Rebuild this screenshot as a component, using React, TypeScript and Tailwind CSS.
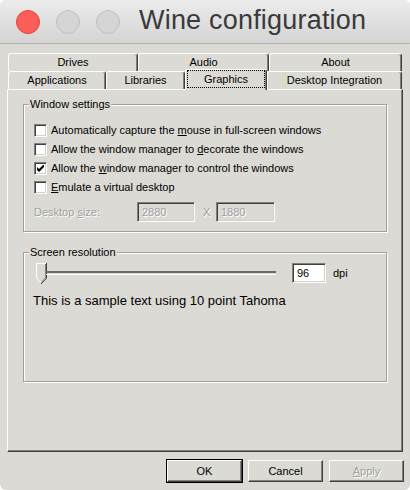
import React, { type FC, type ReactNode } from "react";

const raised =
  "border-t border-l border-white border-r border-b border-r-[#404040] border-b-[#404040] shadow-[inset_-1px_-1px_0_#808080]";
const sunken =
  "border border-t-[#808080] border-l-[#808080] border-r-white border-b-white shadow-[inset_1px_1px_0_#404040,inset_-1px_-1px_0_#d4d0c8]";

const Tab: FC<{ label: string; w: string }> = ({ label, w }) => (
  <div
    className={`${w} h-[18px] flex items-center justify-center rounded-t-[3px] border-t border-l border-white border-r border-r-[#404040] shadow-[inset_-1px_0_0_#808080] text-black`}
  >
    {label}
  </div>
);

const Checkbox: FC<{ checked?: boolean }> = ({ checked }) => (
  <div className={`w-[13px] h-[13px] bg-white ${sunken} flex items-center justify-center shrink-0`}>
    {checked && (
      <svg width="7" height="7" viewBox="0 0 7 7">
        <path d="M0 2v3l2 2 5-5V-1L2 4z" fill="#000" />
      </svg>
    )}
  </div>
);

const CheckRow: FC<{ checked?: boolean; children: ReactNode }> = ({ checked, children }) => (
  <div className="h-[19px] flex items-center gap-[4px]">
    <Checkbox checked={checked} />
    <span>{children}</span>
  </div>
);

const Group: FC<{ title: string; className: string; children: ReactNode }> = ({
  title,
  className,
  children,
}) => (
  <div
    className={`relative border border-[#a0a0a0] shadow-[1px_1px_0_#fff,inset_1px_1px_0_#fff] ${className}`}
  >
    <span className="absolute left-[5px] -top-[8px] bg-[#dcdad5] pl-[1px] pr-[1px] leading-[14px]">
      {title}
    </span>
    {children}
  </div>
);

const Button: FC<{ children: ReactNode; def?: boolean; disabled?: boolean }> = ({
  children,
  def,
  disabled,
}) => (
  <div
    className={`w-[75px] h-[22px] flex items-center justify-center ${
      def ? "outline outline-1 outline-black" : ""
    } ${raised} ${disabled ? "text-[#a0a0a0] [text-shadow:1px_1px_0_#fff]" : "text-black"}`}
  >
    {children}
  </div>
);

const TrafficLight: FC<{ color: string; ring: string }> = ({ color, ring }) => (
  <div className={`w-[24px] h-[24px] rounded-full ${color} border ${ring}`} />
);

export default function App() {
  return (
    <div className="w-[410px] h-[490px] bg-white">
      <div
        className="w-full h-full rounded-[6px] overflow-hidden flex flex-col bg-[#dcdad5] text-[11px] text-black"
        style={{ fontFamily: '"Liberation Sans", Arial, sans-serif' }}
      >
        {/* title bar */}
        <div className="h-[44px] shrink-0 flex items-center bg-gradient-to-b from-[#ececec] to-[#d4d4d4] border-b border-[#b3b3b3] pl-[16px]">
          <div className="flex gap-[16px]">
            <TrafficLight color="bg-[#fc5f57]" ring="border-[#e0443e]" />
            <TrafficLight color="bg-[#d5d5d5]" ring="border-[#c0c0c0]" />
            <TrafficLight color="bg-[#d5d5d5]" ring="border-[#c0c0c0]" />
          </div>
          <div className="ml-[19px] text-[27px] text-[#3a3a3a] leading-none pb-[2px] tracking-[0.2px]">
            Wine configuration
          </div>
        </div>

        <div className="flex-1 flex flex-col px-[7px] pt-[9px]">
          {/* tabs */}
          <div className="flex pl-[1px]">
            <Tab label="Drives" w="w-[130px]" />
            <Tab label="Audio" w="w-[131px]" />
            <Tab label="About" w="w-[133px]" />
          </div>
          <div className="flex items-end h-[18px] pl-[1px] relative z-10">
            <Tab label="Applications" w="w-[98px]" />
            <Tab label="Libraries" w="w-[79px]" />
            <div className="w-[82px] h-[21px] -mb-px bg-[#dcdad5] rounded-t-[3px] border-t border-l border-white border-r border-r-[#404040] shadow-[inset_-1px_0_0_#808080] px-[1px] pb-[2px] flex">
              <div className="flex-1 border border-dotted border-black flex items-center justify-center">
                Graphics
              </div>
            </div>
            <Tab label="Desktop Integration" w="w-[135px]" />
          </div>

          {/* panel */}
          <div className={`h-[363px] ${raised} px-[15px] pt-[14px]`}>
            <Group title="Window settings" className="h-[128px] pt-[16px] pl-[10px]">
              <CheckRow>
                Automatically capture the <u>m</u>ouse in full-screen windows
              </CheckRow>
              <CheckRow>
                Allow the window manager to <u>d</u>ecorate the windows
              </CheckRow>
              <CheckRow checked>
                Allow the <u>w</u>indow manager to control the windows
              </CheckRow>
              <CheckRow>
                <u>E</u>mulate a virtual desktop
              </CheckRow>
              <div className="mt-[5px] h-[20px] flex items-center text-[#a0a0a0] [text-shadow:1px_1px_0_#fff]">
                <span className="w-[103px]">
                  Desktop <u>s</u>ize:
                </span>
                <div className={`w-[58px] h-[20px] ${sunken} flex items-center pl-[4px]`}>2880</div>
                <span className="w-[21px] pl-[8px]">X</span>
                <div className={`w-[59px] h-[20px] ${sunken} flex items-center pl-[4px]`}>1880</div>
              </div>
            </Group>

            <Group title="Screen resolution" className="mt-[20px] h-[130px] pt-[9px] pl-[12px]">
              <div className="h-[22px] flex items-center">
                <svg width="11" height="21" viewBox="0 0 11 21" className="shrink-0">
                  <path d="M0.5 0.5H9.5V15L5 20L0.5 15Z" fill="#dcdad5" />
                  <path d="M0.5 15V0.5H9.5" stroke="#fff" fill="none" />
                  <path d="M10.5 0V15.2L5 21" stroke="#404040" fill="none" />
                  <path d="M9.5 1V14.8L5 19.8" stroke="#808080" fill="none" />
                  <path d="M0.5 15L5 20" stroke="#fff" fill="none" />
                </svg>
                <div className="w-[230px] h-[4px] border-t-2 border-t-[#6a6a6a] border-b border-b-white -ml-[1px]" />
                <div className={`ml-[16px] w-[34px] h-[20px] bg-white ${sunken} flex items-center pl-[4px]`}>
                  96
                </div>
                <span className="ml-[7px]">dpi</span>
              </div>
              <div className="mt-[7px] -ml-[3px] text-[13px]">
                This is a sample text using 10 point Tahoma
              </div>
            </Group>
          </div>

          {/* buttons */}
          <div className="flex justify-end gap-[6px] mt-[8px] -mr-[1px]">
            <Button def>OK</Button>
            <Button>Cancel</Button>
            <Button disabled>
              <u>A</u>pply
            </Button>
          </div>
        </div>
      </div>
    </div>
  );
}
